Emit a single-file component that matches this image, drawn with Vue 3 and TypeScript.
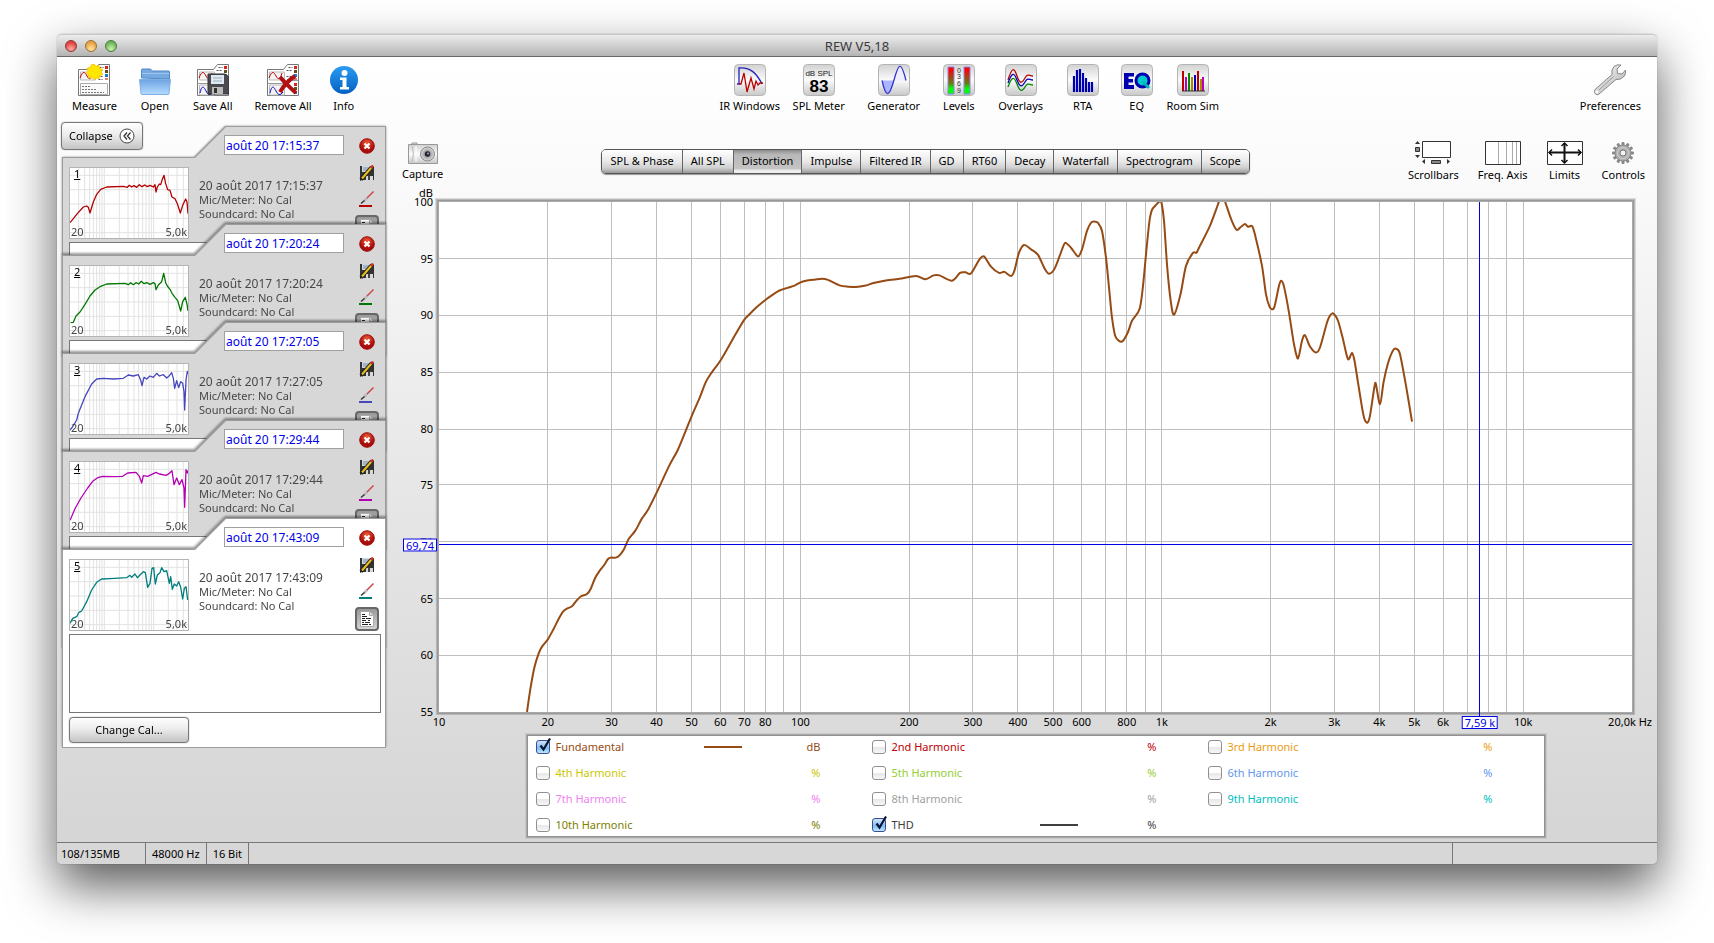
<script setup lang="ts">
import { reactive, ref } from 'vue'

interface Tool { label: string; icon: string; view: string; w: number; h: number }
interface Measurement { id: number; name: string; color: string; trace: string; notes: string }
interface Trace { label: string; color: string; unit: string; on: boolean }

const bevel = '<rect x=".5" y=".5" width="31" height="31" rx="4" fill="url(#bevel)" stroke="#b4b4b4"/>'
const pages = (body: string) => `
  <path d="M.5 31.5V5.500h16l4-5h11v31z" fill="#fff" stroke="#777"/>
  <path d="M2.500 8v8h15V8z" fill="#f4f4f4" stroke="#bbb"/>
  <path d="M2 14c3-8 5-6 7-2s4 4 6-3" fill="none" stroke="#b00"/>
  <path d="M19.500 6.500h5M21.500 3.500h4M19.500 12.500h5M20.500 15.500h4" stroke="#555" stroke-dasharray="2 1"/>
  <path d="M27 2h3v3h-3z" fill="#d22"/><path d="M27 6h3v3h-3z" fill="#665018"/><path d="M27 10h3v3h-3z" fill="#1a78c8"/><path d="M27 15h3" stroke="#b00"/>${body}`
const lower = `<path d="M.5 19.500h16l4-3h11" fill="none" stroke="#999"/><path d="M2.500 21v10h15V21z" fill="#f4f4f4" stroke="#bbb"/>
  <path d="M3 29c2-9 4-6 6-2s4 5 7 1" fill="none" stroke="#00b"/><path d="M27 19h3v3h-3z" fill="#d22"/><path d="M27 23h3v3h-3z" fill="#665018"/><path d="M27 27h3v3h-3z" fill="#1a78c8"/>`

const fileTools: Tool[] = [
  { label: 'Measure', view: '0 0 32 32', w: 32, h: 32, icon: pages(`<path d="M2.500 19.500h27v11h-27z" fill="#fafafa" stroke="#aaa"/><path d="M4 22.500h8M4 25.500h14M4 28.500h22" stroke="#777" stroke-dasharray="2 1"/><path d="M16 0l2 2.500 3-1 .5 3 3 1-1.500 2.500 1.500 2.500-3 1-.5 3-3-.5-2 1.500-2-2-3 .5-.5-3-2-2 1.500-2-.5-3 3-.5 1-3 2.500.5z" fill="#ffe600" stroke="#fc0"/>`) },
  { label: 'Open', view: '0 0 32 32', w: 32, h: 32, icon: `<path d="M2.500 14V6q0-1 1-1h8l2 2h16q1 0 1 1v7z" fill="#76a9e0" stroke="#5088c8"/><path d="M3 9.500h27" stroke="#9cc4ee"/><path d="M.5 15.500h31l-1.500 14q0 1-1 1h-26q-1 0-1-1z" fill="url(#folder)" stroke="#7eaee4"/>` },
  { label: 'Save All', view: '0 0 32 32', w: 32, h: 32, icon: pages(lower + `<path d="M11 10h17l4 3v17h-21z" fill="#4a4a50" stroke="#333"/><path d="M14 11h13v9H14z" fill="#dfe9f2"/><path d="M16 14h9M16 17h9" stroke="#9fb0c0"/><path d="M15 23h11v7H15z" fill="#bbb"/><path d="M17 24h3v5h-3z" fill="#333"/>`) },
  { label: 'Remove All', view: '0 0 32 32', w: 32, h: 32, icon: pages(lower + `<path d="M13 13q6 7 16 16M28 12q-9 6-15 16" fill="none" stroke="#b01010" stroke-width="4"/>`) },
  { label: 'Info', view: '0 0 32 32', w: 32, h: 32, icon: `<circle cx="16" cy="16" r="14" fill="url(#info)"/><circle cx="16.500" cy="9" r="3" fill="#fff"/><path d="M12 13.500h6.500V23H21v2.500h-9V23h2.500v-7H12z" fill="#fff"/>` },
]

const viewTools: Tool[] = [
  { label: 'IR Windows', view: '0 0 32 32', w: 32, h: 32, icon: bevel + `<path d="M3 20h2V4c12-1 18 6 23 16" fill="none" stroke="#22b" stroke-width="1.300"/><path d="M5 20h2l3-11 3 19 4-14 3 11 2-8 2 4 2-2h3" fill="none" stroke="#b00" stroke-width="1.300"/>` },
  { label: 'SPL Meter', view: '0 0 32 32', w: 32, h: 32, icon: bevel + `<text x="16" y="11.500" text-anchor="middle" font-family="Liberation Sans, sans-serif" font-size="8" fill="#222">dB SPL</text><text x="16" y="28" text-anchor="middle" font-family="Liberation Sans, sans-serif" font-size="17" font-weight="700">83</text>` },
  { label: 'Generator', view: '0 0 32 32', w: 32, h: 32, icon: bevel + `<path d="M4 16.500h12C11 34 8 34 4 16.500z" fill="#aab4ff"/><path d="M16 16.500h12C24-1 20 1 16 16.500z" fill="#eef"/><path d="M4 16.500C8 34 11 34 16 16S23-3 28 16.500" fill="none" stroke="#33c" stroke-width="1.300"/>` },
  { label: 'Levels', view: '0 0 32 32', w: 32, h: 32, icon: bevel + `<path d="M5 3h6v27H5zM21 3h6v27h-6z" fill="url(#level)" stroke="#88e"/><g font-family="Liberation Sans, sans-serif" font-size="7" text-anchor="middle" fill="#333"><text x="16" y="9">0</text><text x="16" y="15">3</text><text x="16" y="22">6</text><text x="16" y="29">9</text></g>` },
  { label: 'Overlays', view: '0 0 32 32', w: 32, h: 32, icon: bevel + `<g fill="none" stroke-width="1.300"><path d="M3 16C7 3 9 3 12 12s5 7 8 2 4-2 8-2" stroke="#b00"/><path d="M3 19C7 8 9 8 12 16s5 7 8 2 4-2 8-2" stroke="#00b"/><path d="M3 23C7 12 9 12 12 20s5 8 8 3 4-2 8-2" stroke="#080"/></g>` },
  { label: 'RTA', view: '0 0 32 32', w: 32, h: 32, icon: bevel + `<path d="M7 28V12M10 28V6M13 28V5M16 28V9M19 28V14M22 28v-10M25 28v-10" stroke="#0000b0" stroke-width="2.200"/>` },
  { label: 'EQ', view: '0 0 32 32', w: 32, h: 32, icon: bevel + `<path d="M3 9h10v3.500H7.500v2.500H12v3.500H7.500v2.500H13V25H3z" fill="#0000b0"/><circle cx="21.500" cy="16.500" r="6.500" fill="#0cc" stroke="#0000b0" stroke-width="3"/><path d="M22 18l6 6" stroke="#00b4b4" stroke-width="3"/>` },
  { label: 'Room Sim', view: '0 0 32 32', w: 32, h: 32, icon: bevel + `<g stroke-width="2"><path d="M6 7v20M21 7v20" stroke="#b00"/><path d="M9 13v14M26 13v14" stroke="#b0b"/><path d="M12 9v18" stroke="#080"/><path d="M15 13v14M24 15v12" stroke="#a80"/><path d="M18 11v16" stroke="#00b"/></g><path d="M5 27h23" stroke="#333"/>` },
]

const prefTool: Tool = { label: 'Preferences', view: '0 0 32 32', w: 32, h: 32, icon: `<path d="M1 29.500q-1.500-2 0-4L18 10.500q-1-5 2-8 3-2.500 7-1.500l-4 4 .5 4.500 4.500.5 3.500-4q1 4-2 7t-7.500 2.500L5 30q-2 2-4-.5z" fill="url(#steel)" stroke="#888"/><path d="M5 26L19.500 12.500" stroke="#999"/><circle cx="3" cy="28" r="1.500" fill="#fff"/>` }
const captureTool: Tool = { label: 'Capture', view: '0 0 30 22', w: 30, h: 22, icon: `<path d="M4 2V1h5v2" fill="#ddd" stroke="#999"/><path d="M.5 2.500h29v19H.5z" fill="url(#bevel)" stroke="#999"/><path d="M4 4q3 8 0 16" fill="none" stroke="#bbb"/><path d="M8 4v16" stroke="#fff"/><circle cx="19.500" cy="12" r="7" fill="url(#lens)" stroke="#888"/><circle cx="19.500" cy="12" r="2.700" fill="#223"/><circle cx="20" cy="11.500" r="1" fill="#aac"/>` }
const teeth = Array.from({ length: 12 }, (_, i) => `<rect x="10.500" y="1" width="3" height="4" rx="1" fill="#888" transform="rotate(${i * 30} 12 12)"/>`).join('')
const axisTools: Tool[] = [
  { label: 'Scrollbars', view: '0 0 36 24', w: 36, h: 24, icon: `<path d="M7.500.5h28v16h-28z" fill="#fff" stroke="#333"/><path d="M.5 6.500h4v4h-4zM16.500 19.500h9v3h-9z" fill="#888" stroke="#333"/><path d="M0 3l2.500-3L5 3zM0 14h5l-2.500 3zM10 18v5l-3-2.500zM32 18v5l3-2.500z" fill="#333"/>` },
  { label: 'Freq. Axis', view: '0 0 36 24', w: 36, h: 24, icon: `<path d="M.5.5h35v23H.5z" fill="#fff" stroke="#333"/><path d="M13.500 1v22M21.500 1v22M27.500 1v22M31.500 1v22" stroke="#aaa"/>` },
  { label: 'Limits', view: '0 0 36 24', w: 36, h: 24, icon: `<path d="M.5.5h35v23H.5z" fill="#fff" stroke="#333"/><path d="M2 11.500h32M17.500 2v20" stroke="#111" stroke-width="2"/><path d="M5 8.500l-3 3 3 3M31 8.500l3 3-3 3M14.500 5l3-3 3 3M14.500 19l3 3 3-3" fill="none" stroke="#111" stroke-width="1.500"/>` },
  { label: 'Controls', view: '0 0 24 24', w: 24, h: 24, icon: `${teeth}<circle cx="12" cy="12" r="8" fill="#b0b0b0" stroke="#888"/><circle cx="12" cy="12" r="5.500" fill="none" stroke="#ccc"/><circle cx="12" cy="12" r="3" fill="#f4f4f4" stroke="#777"/>` },
]

const measurements = reactive<Measurement[]>([
  { id: 1, name: 'août 20 17:15:37', color: '#b40000', notes: '', trace: '0,164 10,152 22,137 40,117 50,114 55,118 60,135 70,102 80,79 92,64 110,57 160,55 172,58 178,52 185,57 192,53 200,58 208,50 216,56 224,51 232,56 240,52 250,57 255,50 258,72 262,57 268,48 272,50 276,37 282,22 287,47 293,65 300,67 306,87 315,92 322,107 331,135 338,112 347,93 351,102 354,137' },
  { id: 2, name: 'août 20 17:20:24', color: '#007800', notes: '', trace: '2,170 10,169 18,150 30,138 45,115 60,90 75,72 90,62 110,54 165,52 175,56 182,50 190,56 198,50 206,54 214,46 222,53 230,50 240,55 250,50 255,53 258,71 265,57 275,47 281,22 287,50 292,60 300,70 306,82 315,94 323,104 332,135 338,107 346,94 351,115 354,135' },
  { id: 3, name: 'août 20 17:27:05', color: '#4646be', notes: '', trace: '0,198 8,188 20,168 25,148 45,98 65,60 80,45 100,43 130,45 160,43 175,33 190,36 205,32 212,48 216,65 222,40 230,45 240,36 250,40 260,28 268,36 280,32 290,42 298,35 305,26 310,43 314,73 320,50 326,71 332,53 338,58 342,83 344,138 348,48 352,22 354,30' },
  { id: 4, name: 'août 20 17:29:44', color: '#b400b4', notes: '', trace: '0,175 16,138 33,108 53,78 68,58 83,47 98,43 130,44 158,43 173,33 198,31 208,43 215,63 220,41 233,43 258,31 268,36 288,40 298,34 306,26 312,68 320,48 328,68 336,53 342,78 344,136 348,23 352,33 354,25' },
  { id: 5, name: 'août 20 17:43:09', color: '#007d7d', notes: '', trace: '0,190 8,175 20,170 26,158 35,153 50,125 65,90 80,67 95,57 120,56 170,53 180,46 185,52 195,42 202,53 210,45 220,35 226,38 233,82 240,70 246,25 251,23 256,72 262,45 270,38 275,23 282,35 290,32 298,70 302,50 307,88 313,72 320,78 326,65 332,82 338,117 343,85 348,80 353,120' },
])
const recorded = (m: Measurement) => '20 août 2017 ' + m.name.slice(-8)

const thumbCols: number[] = []
for (const d of [10, 100, 1000]) for (let k = 1; k < 10; k++) {
  const f = d * k
  if (f > 20 && f < 5000) thumbCols.push(Math.round((Math.log10(f / 20) / Math.log10(250)) * 354))
}
const thumbGrid = thumbCols.map((x) => `M${x} 0V210`).join('') + [22, 65, 108, 151, 194].map((y) => `M0 ${y}H354`).join('')

const tabs = ['SPL & Phase', 'All SPL', 'Distortion', 'Impulse', 'Filtered IR', 'GD', 'RT60', 'Decay', 'Waterfall', 'Spectrogram', 'Scope']
const activeTab = ref('Distortion')

// Plot area: 10 Hz to 20 kHz (log) by 55 to 100 dB
const W = 1193
const H = 511
const fx = (f: number) => Math.log10(f / 10) / Math.log10(2000)
const dy = (db: number) => (100 - db) / 45
const pct = (v: number) => (v * 100).toFixed(3) + '%'

const gridF: number[] = []
for (const d of [10, 100, 1000]) for (let k = 2; k <= 10; k++) gridF.push(d * k)
const gridPath =
  gridF.map((f) => `M${Math.floor(fx(f) * W) + 0.5} 0V${H}`).join('') +
  [95, 90, 85, 80, 75, 70, 65, 60].map((d) => `M0 ${Math.floor(dy(d) * H) + 0.5}H${W}`).join('')
const labelF = [10, 20, 30, 40, 50, 60, 70, 80, 100, 200, 300, 400, 500, 600, 800, 1000, 2000, 3000, 4000, 5000, 6000, 10000]
const labelDb = [100, 95, 90, 85, 80, 75, 70, 65, 60, 55]
const fText = (f: number) => (f >= 1000 ? f / 1000 + 'k' : String(f))
const cursor = { f: 7590, db: 69.74 }
const hairPath = `M0 ${Math.floor(dy(cursor.db) * H) + 0.5}H${W}M${Math.floor(fx(cursor.f) * W) + 0.5} 0V${H + 4}`

const curve = '88,511 91.500,487 95.500,466 99.800,452 103,445.500 109,438 114.500,428 120,417 124,410.400 127.500,407.600 133,405 137,400 142,395 148,392.800 152,387 156,377 160.500,369.700 165,364 169,357.700 172,356.300 177,356.300 181,353.500 185,348 189.500,338 196.500,329 203,317 209,308.400 218,290.500 230,264.700 239,248 247,228.500 253,213.700 260.500,196.500 267,180 273,170.400 282,158 294,137 305,118.400 310.500,112.500 317,106 326,98.400 332,94 340.500,88.700 348.500,86 355.500,83.800 361,80.800 367,79 375.500,77.800 383,76.800 389,78 400.500,83.500 409,84.800 417,85.200 425.500,84 435.500,81 445.500,78.800 460.500,77 477,74.200 486.500,77.500 494.500,73.500 500.500,73.500 513,78.800 521,71 526.500,70.500 532,71.500 540.500,57.500 545,54.500 552,64.800 560,71 565.500,70 572,74.200 575.500,68.500 580,50.800 585,43 592,47.500 599,53 605.500,66.500 610,72 616,66 624,45 626.500,40.800 632,45.800 639,54.500 643,47.500 648,29 652,20.800 655,19.500 659,21 663,29 667,55.800 670.500,90.800 673,115.800 676.500,135 683,139.800 688.800,130.800 693,119 700.500,107.500 704,84 707,52.500 710.500,19 713,8 716.500,3.500 720.500,-.5 722.500,.8 725,19 728,62.500 731.500,97.500 735,113 741.500,92.500 747,64 754,51 757.500,50.800 760.500,44.800 770.500,25 777,8 780,-.5 783,-6 786,-.5 792,16.800 797.500,27.800 802,24.800 806,22 809,24.800 813,24 815.500,30.800 823,64 827,92.500 830.500,104.800 833,107.500 835.500,104.800 840,84 842,79 845,84.800 850,110.800 855,142.500 859,156.800 863,139 866,133.500 871,144.800 877,150.800 881,145.800 888,120.800 891,113.800 894,111.500 899,119 904,137.500 909,157.500 913,151 915.500,159 919,180.800 923,205.800 925.500,217.500 928.500,221 931,214 935.500,184.800 937,182.800 941,202.800 944.500,180.800 949,161.500 954.500,148 958,147.500 961,152.500 967,184 973,220'
const smooth = (src: string) => {
  const p = src.split(' ').map((s) => s.split(',').map(Number))
  let d = `M${p[0][0]} ${p[0][1]}`
  for (let i = 0; i < p.length - 1; i++) {
    const a = p[i - 1] ?? p[i], b = p[i], c = p[i + 1], e = p[i + 2] ?? c
    d += `C${(b[0] + (c[0] - a[0]) / 7).toFixed(1)} ${(b[1] + (c[1] - a[1]) / 7).toFixed(1)} ${(c[0] - (e[0] - b[0]) / 7).toFixed(1)} ${(c[1] - (e[1] - b[1]) / 7).toFixed(1)} ${c[0]} ${c[1]}`
  }
  return d
}
const curvePath = smooth(curve)

const traces = reactive<Trace[]>([
  { label: 'Fundamental', color: '#964b14', unit: 'dB', on: true },
  { label: '2nd Harmonic', color: '#be0000', unit: '%', on: false },
  { label: '3rd Harmonic', color: '#eb9b0f', unit: '%', on: false },
  { label: '4th Harmonic', color: '#c8c800', unit: '%', on: false },
  { label: '5th Harmonic', color: '#96cd32', unit: '%', on: false },
  { label: '6th Harmonic', color: '#6496ee', unit: '%', on: false },
  { label: '7th Harmonic', color: '#ee82ee', unit: '%', on: false },
  { label: '8th Harmonic', color: '#a0a0a0', unit: '%', on: false },
  { label: '9th Harmonic', color: '#00bebe', unit: '%', on: false },
  { label: '10th Harmonic', color: '#808000', unit: '%', on: false },
  { label: 'THD', color: '#404040', unit: '%', on: true },
])
</script>

<template>
  <div class="desktop">
    <svg class="defs" width="0" height="0" aria-hidden="true">
      <defs>
        <linearGradient id="bevel" x2="0" y2="1"><stop offset="0" stop-color="#d2d2d2" /><stop offset=".5" stop-color="#fbfbfb" /><stop offset="1" stop-color="#c8c8c8" /></linearGradient>
        <linearGradient id="folder" x2="0" y2="1"><stop offset="0" stop-color="#6fa3e2" /><stop offset="1" stop-color="#b4dcff" /></linearGradient>
        <linearGradient id="info" x2="0" y2="1"><stop offset="0" stop-color="#2a9cf0" /><stop offset="1" stop-color="#0560c4" /></linearGradient>
        <linearGradient id="level" x2="0" y2="1"><stop offset=".1" stop-color="#f00" /><stop offset=".6" stop-color="#6a7a10" /><stop offset=".8" stop-color="#0f0" /></linearGradient>
        <linearGradient id="steel" x2="1" y2="1"><stop offset="0" stop-color="#fff" /><stop offset="1" stop-color="#aaa" /></linearGradient>
        <radialGradient id="lens"><stop offset="0" stop-color="#777" /><stop offset="1" stop-color="#ddd" /></radialGradient>
        <radialGradient id="close" cx=".5" cy=".3"><stop offset="0" stop-color="#f0603a" /><stop offset="1" stop-color="#a80c0c" /></radialGradient>
      </defs>
    </svg>

    <div class="window">
      <header class="titlebar">
        <div class="lights">
          <button class="light red" type="button" aria-label="Close"></button>
          <button class="light amber" type="button" aria-label="Minimise"></button>
          <button class="light green" type="button" aria-label="Zoom"></button>
        </div>
        <h1>REW V5,18</h1>
      </header>

      <nav class="toolbar">
        <div class="file-tools">
          <button v-for="t in fileTools" :key="t.label" class="tool" type="button">
            <svg :viewBox="t.view" :width="t.w" :height="t.h" aria-hidden="true" v-html="t.icon"></svg>
            <span>{{ t.label }}</span>
          </button>
        </div>
        <div class="view-tools">
          <button v-for="t in viewTools" :key="t.label" class="tool" type="button">
            <svg :viewBox="t.view" :width="t.w" :height="t.h" aria-hidden="true" v-html="t.icon"></svg>
            <span>{{ t.label }}</span>
          </button>
        </div>
        <button class="tool" type="button">
          <svg :viewBox="prefTool.view" :width="prefTool.w" :height="prefTool.h" aria-hidden="true" v-html="prefTool.icon"></svg>
          <span>{{ prefTool.label }}</span>
        </button>
      </nav>

      <div class="body">
        <aside class="sidebar">
          <button class="push collapse" type="button">
            Collapse
            <svg width="16" height="16" viewBox="0 0 16 16" aria-hidden="true"><circle cx="8" cy="8" r="7" fill="#fff" stroke="#444" /><path d="M8 4.500L5 8l3 3.500M11.500 4.500L8.500 8l3 3.500" fill="none" stroke="#333" stroke-width="1.300" /></svg>
          </button>
          <ol class="cards">
            <li v-for="m in measurements" :key="m.id" class="card" :class="{ selected: m.id === 5 }">
              <input v-model="m.name" class="name" type="text" :aria-label="'Name of measurement ' + m.id" />
              <div class="thumb">
                <svg viewBox="0 0 354 210" preserveAspectRatio="none" aria-hidden="true">
                  <path class="thumb-grid" :d="thumbGrid" />
                  <polyline class="thumb-line" :points="m.trace" :stroke="m.color" />
                </svg>
                <span class="num">{{ m.id }}</span>
                <span class="lo">20</span>
                <span class="hi">5,0k</span>
              </div>
              <div class="info">
                <p class="date">{{ recorded(m) }}</p>
                <p>Mic/Meter: No Cal</p>
                <p>Soundcard: No Cal</p>
              </div>
              <div class="actions">
                <button class="act first" type="button" aria-label="Remove measurement">
                  <svg width="16" height="16" viewBox="0 0 16 16"><circle cx="8" cy="8" r="7.300" fill="url(#close)" stroke="#a01010" /><path d="M5.500 5.500l5 5M10.500 5.500l-5 5" stroke="#fff" stroke-width="2.200" /></svg>
                </button>
                <button class="act" type="button" aria-label="Save measurement">
                  <svg width="16" height="16" viewBox="0 0 16 16"><path d="M1 1h13l1 1v13H1z" fill="#333" /><path d="M3 1h8v6H3z" fill="#cfd8e0" /><path d="M4 3h6M4 5h6" stroke="#7d90a0" /><path d="M7 11h7v4H7z" fill="#d8d8d8" /><path d="M9 11h2v4H9z" fill="#444" /><path d="M2 14.500L12.500 2.500" stroke="#222" stroke-width="4" /><path d="M3 13.500L12.500 2.500" stroke="#e8c020" stroke-width="2" /><path d="M12 3l2-2.500" stroke="#d03020" stroke-width="2.500" /><path d="M1 16l.5-3 2.500 1.500z" fill="#222" /></svg>
                </button>
                <button class="act" type="button" aria-label="Change trace colour">
                  <svg width="16" height="18" viewBox="0 0 16 18"><path d="M14.500 1.500L7 9" stroke="#c44" stroke-width="1.500" /><path d="M8 8l-3 3" stroke="#bbb" stroke-width="2.500" /><path d="M5.500 10.500L2 13.500" stroke="#333" stroke-width="1.500" /><path d="M0 16h13" :stroke="m.color" stroke-width="2" /></svg>
                </button>
                <button class="act doc" type="button" aria-label="Show notes">
                  <svg width="14" height="16" viewBox="0 0 14 16"><path d="M.5.5h9l4 4v11H.5z" fill="#fff" stroke="#aaa" /><path d="M9.500.5v4h4" fill="#ddd" stroke="#aaa" /><path d="M2 3.500h3M2 5.500h5M2 7.500h3M6 7.500h5M2 9.500h4M8 9.500h2M2 11.500h2M5 11.500h5M2 13.500h6M9 13.500h2" stroke="#222" /></svg>
                </button>
              </div>
              <textarea v-model="m.notes" class="notes" :aria-label="'Notes for measurement ' + m.id"></textarea>
              <button class="push cal" type="button">Change Cal...</button>
            </li>
          </ol>
        </aside>

        <main class="main">
          <div class="controls">
            <button class="tool" type="button">
              <svg :viewBox="captureTool.view" :width="captureTool.w" :height="captureTool.h" aria-hidden="true" v-html="captureTool.icon"></svg>
              <span>{{ captureTool.label }}</span>
            </button>
            <div class="tabs" role="tablist">
              <button v-for="t in tabs" :key="t" type="button" role="tab" class="tab" :class="{ on: t === activeTab }" :aria-selected="t === activeTab" @click="activeTab = t">{{ t }}</button>
            </div>
            <div class="axis-tools">
              <button v-for="t in axisTools" :key="t.label" class="tool" type="button">
                <svg :viewBox="t.view" :width="t.w" :height="t.h" aria-hidden="true" v-html="t.icon"></svg>
                <span>{{ t.label }}</span>
              </button>
            </div>
          </div>

          <div class="plot">
            <svg :viewBox="`0 0 ${W} ${H}`" preserveAspectRatio="none" role="img" aria-label="Distortion graph">
              <path class="grid" :d="gridPath" />
              <path class="curve" :d="curvePath" />
            </svg>
            <svg class="cursor" :viewBox="`0 0 ${W} ${H}`" preserveAspectRatio="none" aria-hidden="true">
              <path class="hair" :d="hairPath" />
            </svg>
            <span class="ylab unit">dB</span>
            <span v-for="d in labelDb" :key="d" class="ylab" :style="{ top: pct(dy(d)) }">{{ d }}</span>
            <span v-for="f in labelF" :key="f" class="xlab" :style="{ left: pct(fx(f)) }">{{ fText(f) }}</span>
            <span class="xlab last">20,0k Hz</span>
            <span class="tag y" :style="{ top: pct(dy(cursor.db)) }">69,74</span>
            <span class="tag x" :style="{ left: pct(fx(cursor.f)) }">7,59 k</span>
          </div>

          <div class="legend">
            <label v-for="t in traces" :key="t.label" class="trace" :style="{ color: t.color }">
              <span class="check">
                <input v-model="t.on" type="checkbox" />
                <svg v-if="t.on" width="14" height="16" viewBox="0 0 14 16" aria-hidden="true"><path d="M3.500 8.500l3 4L13 1.500" fill="none" stroke="#0a1430" stroke-width="2.200" /></svg>
              </span>
              <span class="trace-name">{{ t.label }}</span>
              <i v-if="t.on" class="swatch"></i>
              <span class="trace-unit">{{ t.unit }}</span>
            </label>
          </div>
        </main>
      </div>

      <footer class="status">
        <span class="cell memory">108/135MB</span>
        <span class="cell">48000 Hz</span>
        <span class="cell">16 Bit</span>
        <span class="cell wide"></span>
        <span class="cell end"></span>
      </footer>
    </div>
  </div>
</template>

<style>
body { margin: 0; background: #fff; }
</style>

<style scoped>
* { box-sizing: border-box; }
.desktop {
  min-height: 100vh;
  padding: 34px 57px 79px;
  display: flex;
  overflow: hidden;
  font: 11px/14px "Noto Sans", "Open Sans", sans-serif;
  color: #000;
}
.defs { position: absolute; }
button, input, textarea { font: inherit; color: inherit; margin: 0; }
.window {
  flex: 1;
  min-width: 0;
  display: flex;
  flex-direction: column;
  border-radius: 5px;
  background: linear-gradient(#fff 3%, #fafafa 18%, #e8e8e8 52%, #d6d6d6 95%);
  box-shadow: 0 0 1px rgba(0, 0, 0, .6), 0 22px 50px rgba(0, 0, 0, .65);
}
.titlebar {
  height: 23px;
  display: grid;
  grid-template-columns: 1fr auto 1fr;
  align-items: center;
  border-bottom: 1px solid #686868;
  border-top: 1px solid #c8c8c8;
  border-radius: 5px 5px 0 0;
  background: linear-gradient(#ececec, #b4b4b4);
}
.titlebar h1 { margin: 0; font-size: 13px; line-height: 18px; font-weight: 400; color: #3a3a3a; }
.lights { display: flex; gap: 8px; padding-left: 8px; }
.light {
  width: 12px;
  height: 12px;
  padding: 0;
  border-radius: 50%;
  border: 1px solid;
}
.red { border-color: #8c3a38; background: radial-gradient(circle at 50% 80%, #ffb0a8, #e0403c 70%); }
.amber { border-color: #96703a; background: radial-gradient(circle at 50% 80%, #ffe6a0, #e8a040 70%); }
.green { border-color: #4a7a3c; background: radial-gradient(circle at 50% 80%, #ccf0b0, #6cb458 70%); }

.tool {
  display: flex;
  flex-direction: column;
  align-items: center;
  gap: 3px;
  padding: 0;
  border: 0;
  background: none;
  white-space: nowrap;
}
.toolbar {
  display: flex;
  justify-content: space-between;
  align-items: flex-start;
  height: 61px;
  padding: 7px 16px 0 15px;
}
.file-tools { display: flex; gap: 22px; }
.file-tools .tool:last-child { margin-left: -6px; }
.view-tools { display: grid; grid-template-columns: 70px 68px 82px 48px 76px 48px 60px 52px; margin-right: 6px; }

.body { flex: 1; display: flex; }
.sidebar { width: 333px; padding: 4px 4px 0; flex: none; }
.push {
  border: 1px solid #777;
  border-radius: 4px;
  background: linear-gradient(#fff, #ececec 45%, #c4c4c4);
  box-shadow: 0 0 1px #555;
}
.collapse {
  position: relative;
  z-index: 1;
  display: flex;
  align-items: center;
  gap: 6px;
  height: 28px;
  padding: 0 7px;
}
.cards { list-style: none; margin: -24px 0 0 1px; padding: 0; }
.card {
  position: relative;
  isolation: isolate;
  display: grid;
  grid-template-columns: 120px 1fr 26px;
  grid-template-rows: 20px 84px 82px 30px;
  column-gap: 10px;
  width: 324px;
  height: 230px;
  padding: 9px 5px 4px 7px;
  filter: drop-shadow(0 -2px 1px rgba(0, 0, 0, .4));
}
.card:first-child { filter: drop-shadow(0 0 1px rgba(0, 0, 0, .4)); }
.card + .card { margin-top: -132px; }
.card::before, .card::after {
  content: "";
  position: absolute;
  z-index: -1;
  inset: 0;
  background: #9c9c9c;
  clip-path: polygon(0 31px, 132px 31px, 163px 0, 100% 0, 100% 100%, 0 100%);
}
.card::after {
  inset: 1px;
  background: #d7d7d7;
}
.card.selected::after { background: #fff; }
.name {
  grid-column: 1 / 3;
  grid-row: 1;
  justify-self: end;
  width: 120px;
  height: 20px;
  margin-right: 1px;
  padding: 0 1px;
  border: 1px solid #a0a0a0;
  background: #fff;
  color: #0000e6;
  font-size: 12px;
}
.thumb {
  position: relative;
  grid-column: 1;
  grid-row: 2;
  height: 72px;
  margin-top: 12px;
  border: 1px solid #b4b4b4;
  background: #fff;
  color: #444;
}
.thumb svg { display: block; width: 100%; height: 100%; }
.thumb-grid { stroke: #e2e2e2; stroke-width: 1; vector-effect: non-scaling-stroke; }
.thumb-line { fill: none; stroke-width: 1.3; vector-effect: non-scaling-stroke; stroke-linejoin: round; }
.thumb span { position: absolute; line-height: 12px; }
.num { left: 4px; top: 0; color: #000; text-decoration: underline; }
.lo { left: 1px; bottom: 0; }
.hi { right: 1px; bottom: 0; }
.info { grid-column: 2; grid-row: 2; padding-top: 24px; color: #484848; white-space: nowrap; }
.info p { margin: 0; }
.info .date { font-size: 12px; }
.actions {
  grid-column: 3;
  grid-row: 1 / 3;
  display: flex;
  flex-direction: column;
  gap: 6px;
  width: 24px;
}
.act {
  display: flex;
  justify-content: center;
  align-items: center;
  height: 20px;
  padding: 0;
  border: 0;
  background: none;
}
.first { height: 22px; }
.doc {
  height: 24px;
  border: 2px solid #686868;
  border-radius: 4px;
  background: linear-gradient(#989898, #d4d4d4);
}
.notes {
  grid-column: 1 / 4;
  grid-row: 3;
  height: 79px;
  margin-top: 3px;
  border: 1px solid #777;
  border-radius: 0;
  background: #fff;
  resize: none;
}
.cal { grid-column: 1; grid-row: 4; align-self: end; height: 26px; padding: 0; }

.main { flex: 1; min-width: 0; display: flex; flex-direction: column; padding: 22px 0 0; }
.controls {
  display: flex;
  justify-content: space-between;
  align-items: center;
  height: 42px;
  padding: 0 12px 0 12px;
}
.axis-tools { display: flex; gap: 19px; }
.tabs {
  display: flex;
  border: 1px solid #555;
  border-radius: 5px;
  overflow: hidden;
  box-shadow: 0 1px 1px rgba(0, 0, 0, .4);
}
.tab {
  height: 23px;
  padding: 0 8px;
  border: 0;
  border-right: 1px solid #666;
  background: linear-gradient(#fff, #e8e8e8 50%, #cfcfcf 78%, #999);
  white-space: nowrap;
}
.tab:last-child { border-right: 0; }
.tab.on { background: linear-gradient(#8c8c8c, #b8b8b8 20%, #c4c4c4 80%, #eee 90%); }

.plot {
  position: relative;
  flex: 1;
  min-height: 300px;
  margin: 20px 25px 24px 49px;
  background: #fff;
  box-shadow: 0 0 0 1px #a8a8a8, 0 0 0 2px #9a9a9a, 0 0 0 3px #b8b8b8, 0 0 0 4px #dadada;
}
.plot svg { position: absolute; inset: 0; width: 100%; height: 100%; overflow: hidden; }
.plot .cursor { overflow: visible; }
.grid { stroke: #bebebe; stroke-width: 1; vector-effect: non-scaling-stroke; shape-rendering: crispEdges; }
.curve { fill: none; stroke: #964b14; stroke-width: 2; stroke-linejoin: round; vector-effect: non-scaling-stroke; }
.hair { stroke: #0000e6; stroke-width: 1; vector-effect: non-scaling-stroke; shape-rendering: crispEdges; }
.ylab, .xlab, .tag { position: absolute; white-space: nowrap; line-height: 12px; }
.ylab { right: 100%; margin-right: 6px; transform: translateY(-50%); }
.unit { top: -9px; }
.xlab { top: 100%; margin-top: 4px; transform: translateX(-50%); }
.last { right: -20px; transform: none; }
.tag { border: 1px solid #0000e6; background: #fff; color: #0000e6; text-align: center; line-height: 11px; }
.tag.y { right: 100%; margin-right: 2px; padding: 0 2px; transform: translateY(-50%); }
.tag.x { top: 100%; margin-top: 4px; padding: 0 2px; transform: translateX(-50%); }

.legend {
  display: grid;
  grid-template-columns: repeat(3, 1fr);
  grid-auto-rows: 26px;
  width: 1016px;
  max-width: calc(100% - 74px);
  height: 100px;
  margin: 0 25px 6px 49px;
  align-self: center;
  padding: 0 0 0 8px;
  background: #fff;
  box-shadow: 0 0 0 1px #929292, 0 0 0 2px #a8a8a8, 0 0 0 3px #cacaca;
}
.trace { display: grid; grid-template-columns: 14px 154px 38px 79px 1fr; align-items: center; height: 22px; }
.check { position: relative; display: block; height: 14px; }
.check input {
  appearance: none;
  display: block;
  width: 14px;
  height: 14px;
  border: 1px solid #909090;
  border-radius: 3px;
  background: linear-gradient(#fff 45%, #e8e8e8 55%, #f8f8f8);
}
.check input:checked { border-color: #3a4c94; background: linear-gradient(#cfe4fa, #7fbcf4 60%, #bfeaff); }
.check svg { position: absolute; left: 1px; bottom: 1px; pointer-events: none; }
.trace-name { padding-left: 6px; }
.swatch { height: 2px; background: currentColor; }
.trace-unit { grid-column: 4; text-align: right; }

.status { display: flex; height: 22px; border-top: 1px solid #777; background: #d7d7d7; border-radius: 0 0 5px 5px; }
.cell { padding: 0 6px; line-height: 21px; border-right: 1px solid #777; }
.memory { width: 89px; padding-left: 4px; }
.wide { flex: 1; }
.end { width: 204px; border-right: 0; }
</style>
